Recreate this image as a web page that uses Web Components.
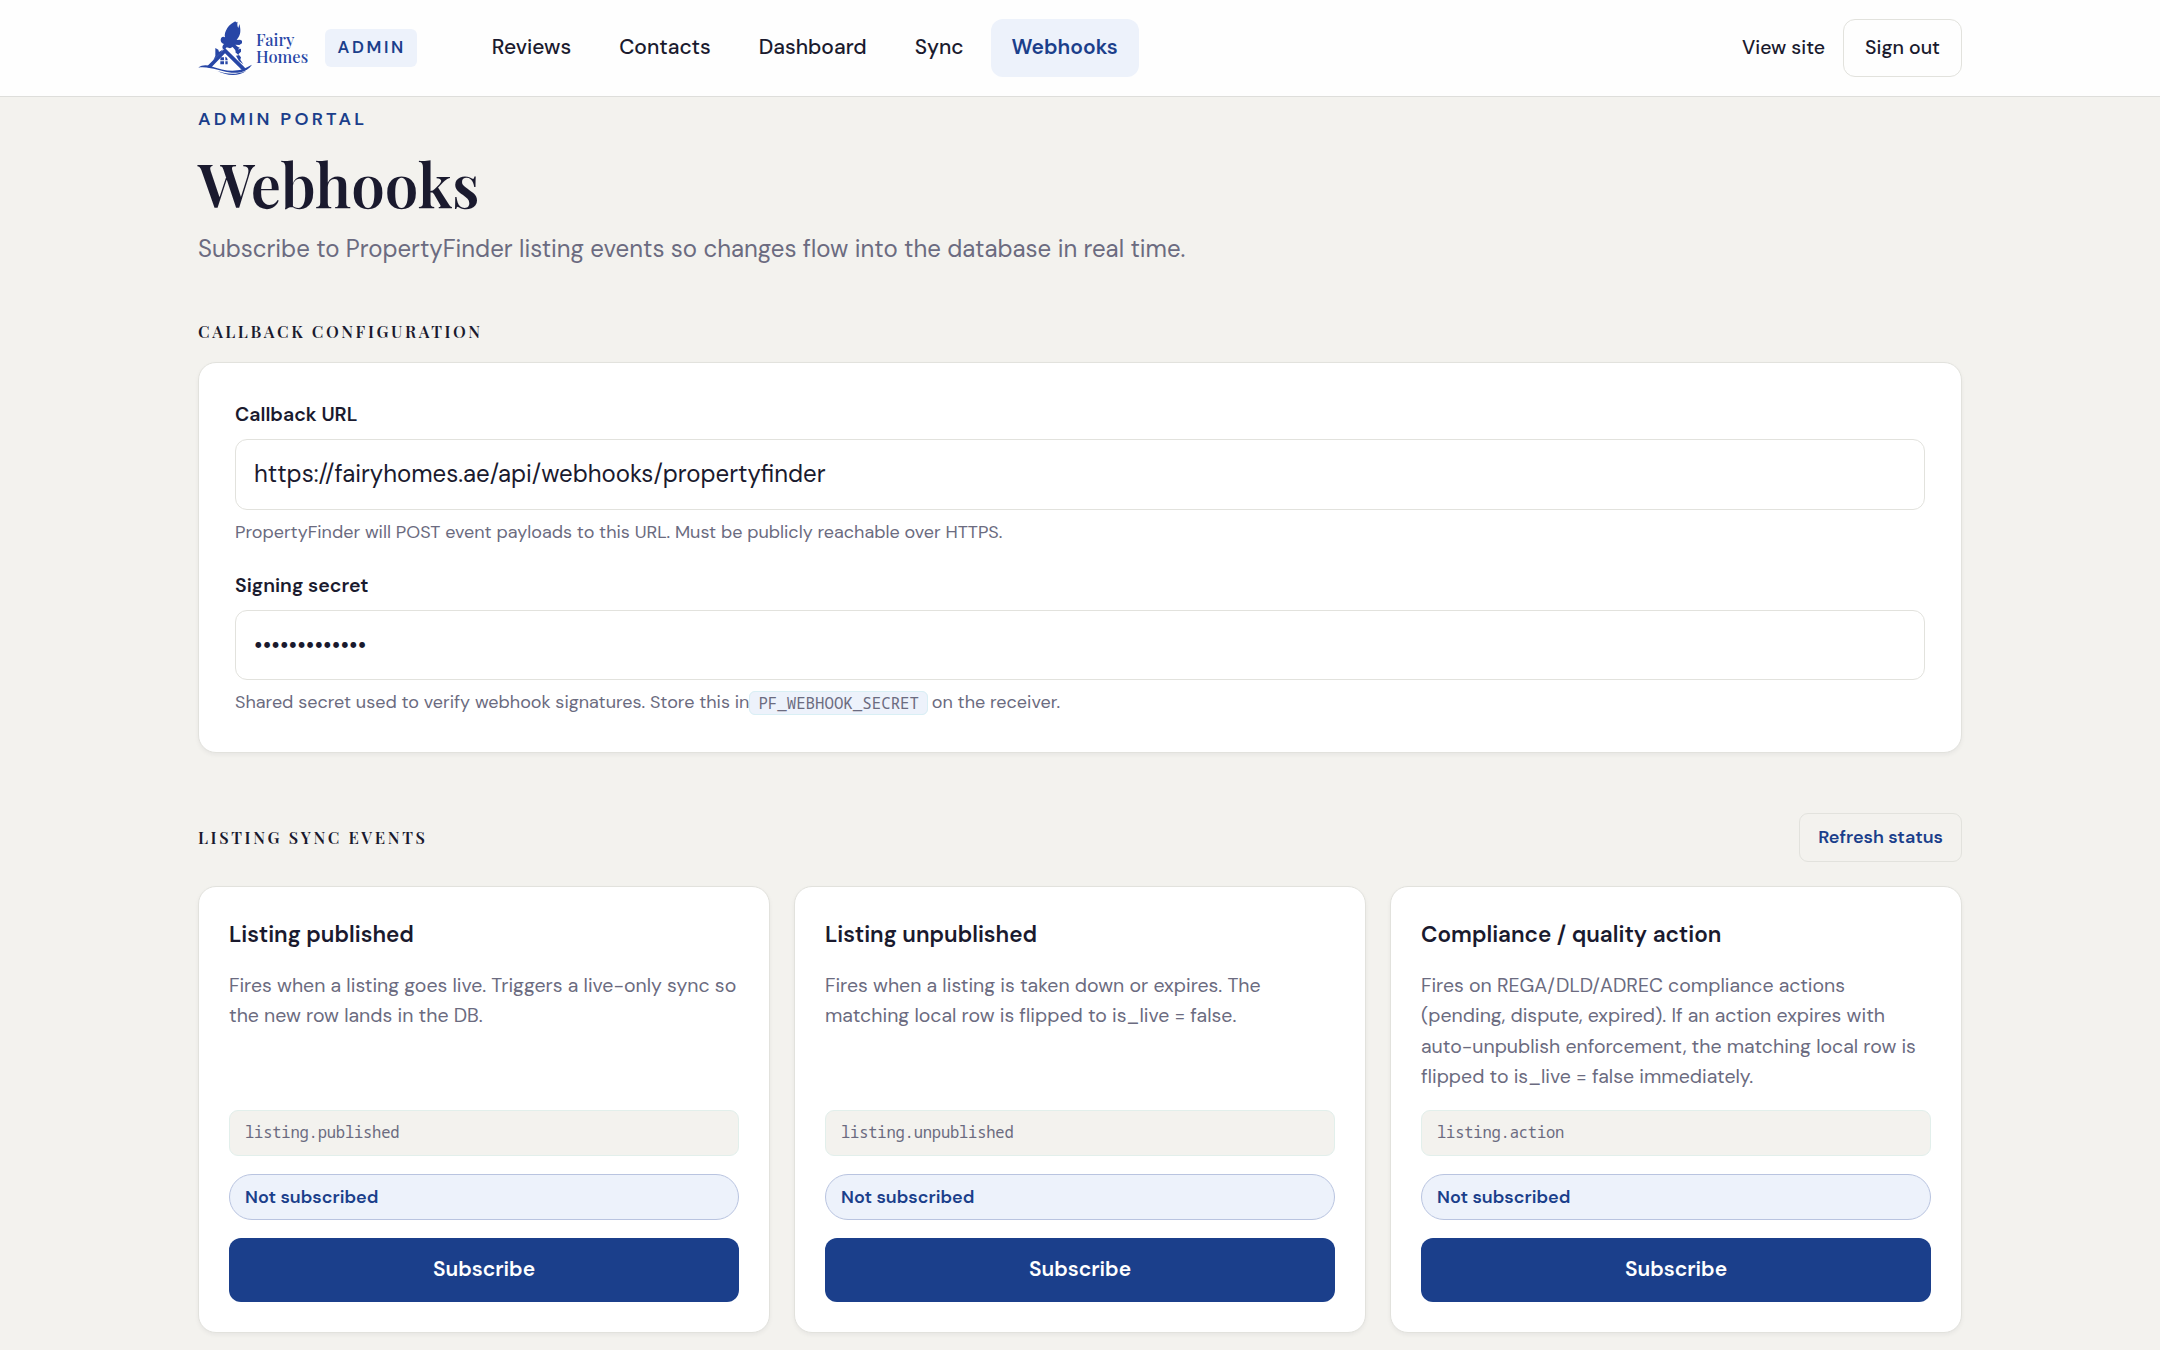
<!DOCTYPE html>
<html lang="en">
<head>
<meta charset="utf-8">
<title>Webhooks - Fairy Homes Admin</title>
<style>
    :root{
        --navy: #1b3f8b;
        --ink: #1a1a2e;
        --muted: #6b6b80;
        --sand: #f3f2ee;
        --pale: #edf2fb;
        --line: #e2e2dd;
        --serif: "Playfair Display", "Liberation Serif", serif;
        --mono: "Noto Sans Mono", "DejaVu Sans Mono", monospace;
    }
    body{
        margin: 0;
        height: 1350px;
        overflow: hidden;
        background: var(--sand);
        color: var(--ink);
        font-family: "DM Sans", Inter, sans-serif;
        font-size: 24px;
        line-height: 36px;
    }
</style>
</head>
<body>
<admin-header>
    <nav-link>Reviews</nav-link>
    <nav-link>Contacts</nav-link>
    <nav-link>Dashboard</nav-link>
    <nav-link>Sync</nav-link>
    <nav-link active>Webhooks</nav-link>
</admin-header>
<webhooks-page></webhooks-page>

<script>
class FairyLogo extends HTMLElement{
    constructor(){
        super();
        this.attachShadow({mode: "open"}).innerHTML = `
        <style>
            :host{
                display: flex;
                align-items: center;
                color: #2746a6;
            }
            svg{
                width: 57px;
                height: 58px;
                display: block;
            }
            div{
                font: 500 16.5px/17.5px var(--serif);
                margin-left: 1px;
            }
        </style>
        <svg viewBox="0 0 171 174" fill="currentColor">
            <path d="M112 7 C104 12 94 18 88 27 C81 38 79 47 81 55 C74 51 69 55 68 63 C68 70 73 74 78 75 C73 80 71 87 76 91 L80 93 L86 85 L96 88 L104 84 L111 92 L115 101 L122 98 L120 90 L126 87 L119 83 L112 77 L124 78 L132 73 L132 65 L126 62 L116 63 L122 54 C129 43 128 29 124 15 L121 27 C118 23 117 13 119 8 C116 11 113 10 112 7 Z"/>
            <path d="M52 87 L61 92 L63 99 L76 91 L69 101 L46 123 L52 111 L52 101 Z"/>
            <path d="M116 92 L129 89 L129 98 L121 106 L129 115 L127 122 L136 136 L123 126 L114 110 L122 109 L112 100 Z"/>
            <path d="M79 90 L84 90 L138 143 L146 153 L131 152 L81 103 L38 147 L26 143 Z"/>
            <path d="M1 146 C12 137 27 138 39 142 C72 154 105 160 132 151 C145 147 154 141 162 137 C154 149 143 156 128 160 C94 166 68 153 38 148 C25 145 12 143 1 146 Z"/>
            <path d="M58 156 C83 165 114 169 145 155 C118 176 82 168 58 156 Z"/>
            <path d="M69 115 H78 V124 H67 C67 120 67 117 69 115 Z M82 113 C87 115 89 119 89 124 H82 Z M67 127 H78 V136 H67 Z M82 127 H89 V136 H82 Z"/>
        </svg>
        <div>Fairy<br>Homes</div>
        `;
    }
}

class NavLink extends HTMLElement{
    constructor(){
        super();
        this.attachShadow({mode: "open"}).innerHTML = `
        <style>
            :host{
                display: block;
                padding: 12px 21px 14px;
                border-radius: 12px;
                font-size: 21px;
                font-weight: 500;
                line-height: 32px;
            }
            :host([active]){
                background: var(--pale);
                color: var(--navy);
                font-weight: 600;
            }
        </style>
        <slot></slot>
        `;
    }
}

class AdminHeader extends HTMLElement{
    constructor(){
        super();
        this.attachShadow({mode: "open"}).innerHTML = `
        <style>
            :host{
                display: block;
                background: #fefefe;
                border-bottom: 1px solid #dededb;
            }
            .bar{
                box-sizing: border-box;
                width: 1764px;
                height: 96px;
                margin: 0 auto;
                display: flex;
                align-items: center;
            }
            .badge{
                margin-left: 17px;
                padding: 0 11px 1px 12.5px;
                border-radius: 6px;
                background: var(--pale);
                color: var(--navy);
                font-size: 17px;
                font-weight: 600;
                line-height: 37px;
                letter-spacing: 2.6px;
            }
            nav{
                display: flex;
                gap: 6px;
                margin-left: 54px;
            }
            .account{
                display: flex;
                align-items: center;
                gap: 18px;
                margin-left: auto;
                font-size: 19.5px;
                font-weight: 500;
            }
            .account span{
                padding-bottom: 1px;
            }
            .account .sign-out{
                padding: 0 21px 1px;
                border: 1px solid var(--line);
                border-radius: 12px;
                line-height: 55px;
            }
        </style>
        <div class="bar">
            <fairy-logo></fairy-logo>
            <span class="badge">ADMIN</span>
            <nav><slot></slot></nav>
            <div class="account">
                <span>View site</span>
                <span class="sign-out">Sign out</span>
            </div>
        </div>
        `;
    }
}

class SectionTitle extends HTMLElement{
    constructor(){
        super();
        this.attachShadow({mode: "open"}).innerHTML = `
        <style>
            :host{
                display: block;
            }
            h2{
                margin: 0;
                font: 600 16.5px/24px var(--serif);
                letter-spacing: 2.63px;
                text-transform: uppercase;
            }
        </style>
        <h2><slot></slot></h2>
        `;
    }
}

class FormField extends HTMLElement{
    constructor(){
        super();
        this.attachShadow({mode: "open"}).innerHTML = `
        <style>
            :host{
                display: block;
            }
            .label{
                padding-top: 1px;
                font-size: 19.5px;
                font-weight: 600;
                line-height: 29px;
            }
            .box{
                box-sizing: border-box;
                height: var(--box-height, 71px);
                margin: 10px 0 9px;
                padding: 0 18px 1px;
                border: 1px solid var(--line);
                border-radius: 12px;
                display: flex;
                align-items: center;
            }
            .help{
                color: var(--muted);
                font-size: 18px;
                line-height: 27px;
            }
        </style>
        <div class="label">${this.getAttribute("label")}</div>
        <div class="box">${this.getAttribute("value")}</div>
        <div class="help"><slot></slot></div>
        `;
    }
}

class EventCard extends HTMLElement{
    constructor(){
        super();
        this.attachShadow({mode: "open"}).innerHTML = `
        <style>
            :host{
                box-sizing: border-box;
                display: flex;
                flex-direction: column;
                gap: 18px;
                padding: 30px;
                background: #fff;
                border: 1px solid var(--line);
                border-radius: 18px;
                box-shadow: 0 2px 4px rgba(26,26,46,.05);
            }
            h3{
                margin: 0;
                font-size: 22.5px;
                font-weight: 600;
                line-height: 35px;
            }
            p{
                margin: 0;
                padding-top: 1px;
                flex: 1;
                color: var(--muted);
                font-size: 19.5px;
                line-height: 30.25px;
            }
            .event{
                padding: 0 15px 1px;
                border: 1px solid #e2efeb;
                border-radius: 9px;
                background: var(--sand);
                color: var(--muted);
                font: 15.5px/43px var(--mono);
                letter-spacing: -.22px;
            }
            .status{
                padding: 0 15px;
                border: 1px solid #b9c4e0;
                border-radius: 23px;
                background: var(--pale);
                color: var(--navy);
                font-size: 18px;
                font-weight: 600;
                line-height: 44px;
            }
            button{
                height: 64px;
                padding: 0 0 2px;
                border: 0;
                border-radius: 12px;
                background: var(--navy);
                color: #fff;
                font: 600 21px/32px "DM Sans", Inter, sans-serif;
            }
        </style>
        <h3>${this.getAttribute("name")}</h3>
        <p><slot></slot></p>
        <div class="event">${this.getAttribute("event")}</div>
        <div class="status">Not subscribed</div>
        <button>Subscribe</button>
        `;
    }
}

class WebhooksPage extends HTMLElement{
    constructor(){
        super();
        this.attachShadow({mode: "open"}).innerHTML = `
        <style>
            :host{
                display: block;
                width: 1764px;
                margin: 0 auto;
                padding-top: 9px;
            }
            .eyebrow{
                color: var(--navy);
                font-size: 18px;
                font-weight: 600;
                line-height: 27px;
                letter-spacing: 3.24px;
            }
            h1{
                margin: 17px 0 15px;
                font: 600 60px/66px var(--serif);
            }
            .lead{
                color: var(--muted);
                margin-bottom: 52px;
            }
            .panel{
                box-sizing: border-box;
                margin: 19px 0 60px;
                padding: 36px;
                background: #fff;
                border: 1px solid var(--line);
                border-radius: 18px;
                box-shadow: 0 2px 4px rgba(26,26,46,.05);
                display: flex;
                flex-direction: column;
                gap: 24px;
            }
            .secret{
                --box-height: 70px;
            }
            code{
                padding: 0 8px;
                margin-right: -1px;
                border: 1px solid #d9eff5;
                border-radius: 6px;
                background: var(--pale);
                font: 15.75px/20px var(--mono);
                vertical-align: -1px;
            }
            .row{
                display: flex;
                align-items: center;
                justify-content: space-between;
                margin-bottom: 24px;
            }
            .row section-title{
                padding-bottom: 1px;
            }
            .refresh{
                padding: 0 18px;
                border: 1px solid var(--line);
                border-radius: 9px;
                color: var(--navy);
                font-size: 18px;
                font-weight: 600;
                line-height: 47px;
            }
            .cards{
                display: grid;
                grid-template-columns: repeat(3, 1fr);
                gap: 24px;
            }
        </style>
        <div class="eyebrow">ADMIN PORTAL</div>
        <h1>Webhooks</h1>
        <div class="lead">Subscribe to PropertyFinder listing events so changes flow into the database in real time.</div>
        <section-title>Callback configuration</section-title>
        <div class="panel">
            <form-field label="Callback URL" value="https://fairyhomes.ae/api/webhooks/propertyfinder">PropertyFinder will POST event payloads to this URL. Must be publicly reachable over HTTPS.</form-field>
            <form-field class="secret" label="Signing secret" value="•••••••••••••">Shared secret used to verify webhook signatures. Store this in<code>PF_WEBHOOK_SECRET</code> on the receiver.</form-field>
        </div>
        <div class="row">
            <section-title>Listing sync events</section-title>
            <span class="refresh">Refresh status</span>
        </div>
        <div class="cards">
            <event-card name="Listing published" event="listing.published">Fires when a listing goes live. Triggers a live-only sync so the new row lands in the DB.</event-card>
            <event-card name="Listing unpublished" event="listing.unpublished">Fires when a listing is taken down or expires. The matching local row is flipped to is_live = false.</event-card>
            <event-card name="Compliance / quality action" event="listing.action">Fires on REGA/DLD/ADREC compliance actions (pending, dispute, expired). If an action expires with auto-unpublish enforcement, the matching local row is flipped to is_live = false immediately.</event-card>
        </div>
        `;
    }
}

customElements.define("fairy-logo", FairyLogo);
customElements.define("nav-link", NavLink);
customElements.define("admin-header", AdminHeader);
customElements.define("section-title", SectionTitle);
customElements.define("form-field", FormField);
customElements.define("event-card", EventCard);
customElements.define("webhooks-page", WebhooksPage);
</script>
</body>
</html>
